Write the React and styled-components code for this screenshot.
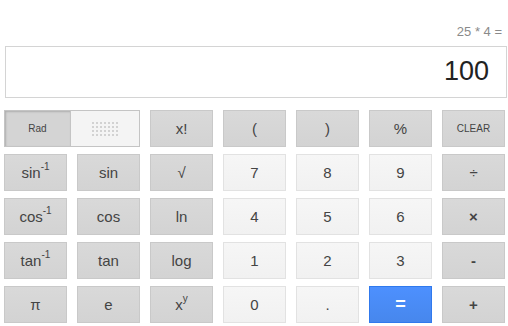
import React from 'react'
import styled, { createGlobalStyle, css } from 'styled-components'

const GlobalStyle = createGlobalStyle`
  body {
    margin: 0;
    background: #fff;
    font-family: Arial, "Liberation Sans", sans-serif;
  }
`

const keys = [
  [
    { label: 'x!', kind: 'op' },
    { label: '(', kind: 'op' },
    { label: ')', kind: 'op' },
    { label: '%', kind: 'op' },
    { label: 'CLEAR', kind: 'op', small: true },
  ],
  [
    { label: 'sin', sup: '-1', kind: 'op' },
    { label: 'sin', kind: 'op' },
    { label: '√', kind: 'op' },
    { label: '7', kind: 'num' },
    { label: '8', kind: 'num' },
    { label: '9', kind: 'num' },
    { label: '÷', kind: 'op' },
  ],
  [
    { label: 'cos', sup: '-1', kind: 'op' },
    { label: 'cos', kind: 'op' },
    { label: 'ln', kind: 'op' },
    { label: '4', kind: 'num' },
    { label: '5', kind: 'num' },
    { label: '6', kind: 'num' },
    { label: '×', kind: 'op', bold: true },
  ],
  [
    { label: 'tan', sup: '-1', kind: 'op' },
    { label: 'tan', kind: 'op' },
    { label: 'log', kind: 'op' },
    { label: '1', kind: 'num' },
    { label: '2', kind: 'num' },
    { label: '3', kind: 'num' },
    { label: '-', kind: 'op', bold: true },
  ],
  [
    { label: 'π', kind: 'op' },
    { label: 'e', kind: 'op' },
    { label: 'x', sup: 'y', kind: 'op' },
    { label: '0', kind: 'num' },
    { label: '.', kind: 'num' },
    { label: '=', kind: 'equals' },
    { label: '+', kind: 'op', bold: true },
  ],
]

const App = () => {
  return (
    <>
      <GlobalStyle />
      <Calculator>
        <Expression>25 * 4 =</Expression>
        <Display>100</Display>
        <Pad>
          <Toggle>
            <ToggleSide active>Rad</ToggleSide>
            <ToggleSide>
              <Dots>
                {Array.from({ length: 28 }).map((_, i) => (
                  <Dot key={i} />
                ))}
              </Dots>
            </ToggleSide>
          </Toggle>
          {keys.flat().map((k, i) => (
            <Key key={i} kind={k.kind} small={k.small} bold={k.bold}>
              {k.label}
              {k.sup && <sup>{k.sup}</sup>}
            </Key>
          ))}
        </Pad>
      </Calculator>
    </>
  )
}

export default App

const Calculator = styled.div`
  width: 508px;
  height: 326px;
  box-sizing: border-box;
  padding: 0 1px 0 4px;
`

const Expression = styled.div`
  height: 46px;
  box-sizing: border-box;
  padding: 24px 5px 0 0;
  text-align: right;
  font-size: 13px;
  line-height: 15px;
  color: #8a8a8a;
`

const Display = styled.div`
  margin-left: 1px;
  height: 52px;
  box-sizing: border-box;
  border: 1px solid #d4d4d4;
  padding: 0 17px 0 0;
  text-align: right;
  font-size: 27px;
  line-height: 48px;
  color: #222;
`

const Pad = styled.div`
  margin-top: 12px;
  display: grid;
  grid-template-columns: repeat(7, 63px);
  grid-auto-rows: 37px;
  column-gap: 10px;
  row-gap: 7px;
`

const Toggle = styled.div`
  grid-column: span 2;
  display: flex;
  border: 1px solid #c4c4c4;
  box-sizing: border-box;
`

const ToggleSide = styled.div`
  flex: 1;
  display: flex;
  align-items: center;
  justify-content: center;
  font-size: 10px;
  color: #444;
  background: ${p => (p.active ? '#d4d4d4' : '#f4f4f4')};
  box-shadow: ${p => (p.active ? 'inset 1px 1px 2px rgba(0,0,0,0.18)' : 'none')};
  ${p => p.active && css`
    flex: 0 0 65px;
    border-right: 1px solid #c4c4c4;
  `}
`

const Dots = styled.div`
  display: grid;
  grid-template-columns: repeat(7, 2px);
  grid-auto-rows: 2px;
  gap: 2px;
`

const Dot = styled.span`
  background: #d2d2d2;
`

const Key = styled.div`
  display: flex;
  align-items: center;
  justify-content: center;
  box-sizing: border-box;
  font-size: ${p => (p.small ? '10px' : '15px')};
  font-weight: ${p => (p.bold ? 'bold' : 'normal')};
  color: #444;
  border: 1px solid #c9c9c9;
  background: linear-gradient(#d9d9d9, #d3d3d3);

  ${p => p.kind === 'num' && css`
    border-color: #e2e2e2;
    background: linear-gradient(#f6f6f6, #f1f1f1);
  `}

  ${p => p.kind === 'equals' && css`
    border-color: #3079ed;
    background: linear-gradient(#4d90fe, #4787ed);
    color: #fff;
    font-weight: bold;
    font-size: 18px;
  `}

  sup {
    font-size: 10px;
    position: relative;
    top: -6px;
    vertical-align: baseline;
    line-height: 0;
  }
`
